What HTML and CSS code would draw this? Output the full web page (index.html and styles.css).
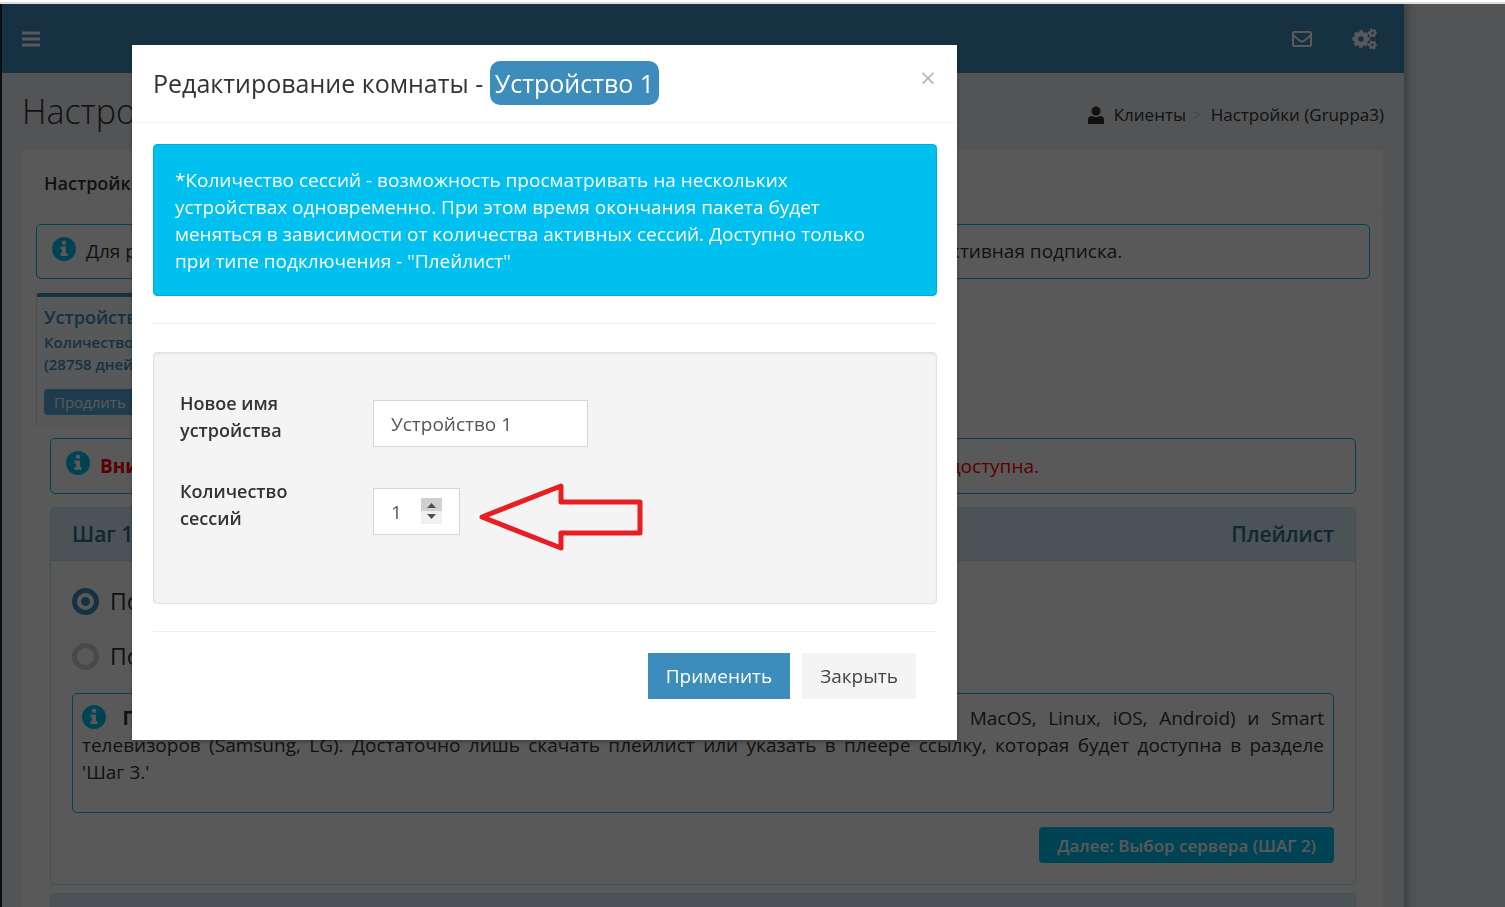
FILE: index.html
```html
<!DOCTYPE html>
<html lang="ru">
<head>
    <meta charset="UTF-8">
    <meta name="viewport" content="width=device-width, initial-scale=1.0">
    <title>Настройки</title>
    <link rel="stylesheet" href="styles.css">
</head>
<body>
    <div class="wrapper">
        <header class="main-header">
            <button type="button" class="nav-btn" aria-label="Меню">
                <svg width="18" height="16" viewBox="0 0 18 16"><path d="M1 2h16M1 8h16M1 14h16" stroke="#fff" stroke-width="3" stroke-linecap="round"/></svg>
            </button>
            <nav class="nav-right">
                <a href="#" aria-label="Сообщения">
                    <svg width="20" height="16" viewBox="0 0 20 16" fill="none" stroke="#fff" stroke-width="2"><rect x="1" y="1" width="18" height="14" rx="1"/><path d="M1 4l7 6q2 1 4 0l7-6"/></svg>
                </a>
                <a href="#" aria-label="Параметры">
                    <svg width="26" height="22" viewBox="0 0 26 22" fill="none" stroke="#fff">
                        <circle cx="9" cy="11" r="5" stroke-width="4.500"/>
                        <circle cx="9" cy="11" r="7.500" stroke-width="2.500" stroke-dasharray="3.500 2.390" stroke-dashoffset="1.750"/>
                        <circle cx="20.500" cy="5" r="2.400" stroke-width="2.200"/>
                        <circle cx="20.500" cy="5" r="3.800" stroke-width="1.600" stroke-dasharray="2.200 1.780" stroke-dashoffset="1.100"/>
                        <circle cx="20.500" cy="17" r="2.400" stroke-width="2.200"/>
                        <circle cx="20.500" cy="17" r="3.800" stroke-width="1.600" stroke-dasharray="2.200 1.780" stroke-dashoffset="1.100"/>
                    </svg>
                </a>
            </nav>
        </header>

        <section class="content-header">
            <h1>Настройки</h1>
            <nav class="breadcrumb">
                <svg width="16" height="18" viewBox="0 0 16 18" fill="#333"><circle cx="8" cy="5" r="4.500"/><path d="M0 17v-3q0-4 4-4q4 2 8 0q4 0 4 4v3q0 1-1 1H1q-1 0-1-1z"/></svg>
                <a href="#">Клиенты</a>
                <span class="sep">&gt;</span>
                <a href="#">Настройки (Gruppa3)</a>
            </nav>
        </section>

        <main class="box">
            <h2 class="box-title">Настройки</h2>
            <div class="box-body">
                <div class="note">
                    <svg class="info" viewBox="0 0 24 24"><circle cx="12" cy="12" r="12" fill="#00c0ef"/><path d="M12 3.500a2.200 2.200 0 1 1 0 4.400a2.200 2.200 0 1 1 0-4.400zM8.500 9.500h5.500v6.500h1.500v3h-7v-3H10v-3.500H8.500z" fill="#fff"/></svg>
                    <p>Для работы подключенного устройства необходимо, чтобы на балансе пользователя была активная подписка.</p>
                </div>

                <div class="tabs">
                    <div class="tab">
                        <a href="#" class="tab-name">Устройство 1</a>
                        <span class="tab-text">Количество сессий: 1</span>
                        <span class="tab-text">(28758 дней)</span>
                        <button type="button" class="extend">Продлить</button>
                    </div>
                </div>

                <div class="tab-content">
                    <div class="note warn">
                        <svg class="info" viewBox="0 0 24 24"><circle cx="12" cy="12" r="12" fill="#00c0ef"/><path d="M12 3.500a2.200 2.200 0 1 1 0 4.400a2.200 2.200 0 1 1 0-4.400zM8.500 9.500h5.500v6.500h1.500v3h-7v-3H10v-3.500H8.500z" fill="#fff"/></svg>
                        <p><b>Внимание!</b> После смены типа подключения ранее созданная ссылка на плейлист будет недоступна.</p>
                    </div>

                    <div class="panel">
                        <div class="panel-heading">
                            <span>Шаг 1</span>
                            <span>Плейлист</span>
                        </div>
                        <div class="panel-body">
                            <label class="choice"><input type="radio" name="type" checked> Подключение через плейлист</label>
                            <label class="choice"><input type="radio" name="type"> Подключение через портал</label>
                            <div class="description">
                                <svg class="info" viewBox="0 0 24 24"><circle cx="12" cy="12" r="12" fill="#00c0ef"/><path d="M12 3.500a2.200 2.200 0 1 1 0 4.400a2.200 2.200 0 1 1 0-4.400zM8.500 9.500h5.500v6.500h1.500v3h-7v-3H10v-3.500H8.500z" fill="#fff"/></svg>
                                <b>Плейлист</b> - подходит для большинства плееров, консолей, компьютеров (Windows, MacOS, Linux, iOS, Android) и Smart телевизоров (Samsung, LG). Достаточно лишь скачать плейлист или указать в плеере ссылку, которая будет доступна в разделе 'Шаг&nbsp;3.'
                            </div>
                            <button type="button" class="next">Далее: Выбор сервера (ШАГ 2)</button>
                        </div>
                    </div>

                    <div class="panel">
                        <div class="panel-heading"></div>
                    </div>
                </div>
            </div>
        </main>
    </div>

    <div class="backdrop">
        <form class="modal" role="dialog" aria-labelledby="modalTitle">
            <div class="modal-header">
                <h4 id="modalTitle">Редактирование комнаты - <span class="device">Устройство 1</span></h4>
                <button type="button" class="close" aria-label="Закрыть окно">&times;</button>
            </div>
            <div class="modal-body">
                <div class="callout">*Количество сессий - возможность просматривать на нескольких устройствах одновременно. При этом время окончания пакета будет меняться в зависимости от количества активных сессий. Доступно только при типе подключения - "Плейлист"</div>
                <hr>
                <div class="well">
                    <div class="form-row">
                        <label for="deviceName">Новое имя устройства</label>
                        <input type="text" id="deviceName" value="Устройство 1">
                    </div>
                    <div class="form-row">
                        <label for="sessions">Количество сессий</label>
                        <div class="number">
                            <input type="number" id="sessions" value="1" min="1">
                            <svg class="spinner" viewBox="0 0 21 26"><path d="M0 0h21v13H0z" fill="#d0d0d0"/><path d="M0 13h21v13H0z" fill="#f0f0f0"/><path d="M6 10l4.500-5L15 10zM6 16h9l-4.500 5z" fill="#505050"/></svg>
                            <svg class="arrow" viewBox="0 0 166 70"><path d="M3 35L82 4v16h79v31H82v15z" fill="none" stroke="#e81e25" stroke-width="5" stroke-linejoin="round"/></svg>
                        </div>
                    </div>
                </div>
                <hr>
                <div class="modal-footer">
                    <button type="submit" class="btn btn-primary">Применить</button>
                    <button type="button" class="btn">Закрыть</button>
                </div>
            </div>
        </form>
    </div>
</body>
</html>
```
FILE: styles.css
```css
* {
    box-sizing: border-box;
}

html {
    height: 100%;
    overflow: hidden;
    border-top: 2px solid #fff;
}

body {
    margin: 0;
    height: 100%;
    padding-right: 101px;
    overflow: hidden;
    border-top: 2px solid #ddd;
    background: #ecf0f5;
    font-family: "Open Sans", sans-serif;
    font-size: 19px;
    line-height: 27px;
    color: #333;
}

h1, h2, h4, p {
    margin: 0;
    font-weight: normal;
}

button, input {
    font: inherit;
}

a {
    color: inherit;
    text-decoration: none;
}

.wrapper {
    min-height: 100%;
    border-left: 2px solid #222d32;
    background: #ecf0f5;
    box-shadow: 0 0 11px rgba(0, 0, 0, 0.5);
}

.main-header {
    display: flex;
    align-items: center;
    justify-content: space-between;
    height: 69px;
    padding: 0 26px 0 20px;
    background: #3c8dbc;
}

.nav-btn {
    padding: 0;
    border: 0;
    background: none;
}

.nav-right {
    display: flex;
    align-items: center;
    gap: 40px;
}

.main-header svg {
    display: block;
}

.content-header {
    display: flex;
    align-items: center;
    justify-content: space-between;
    height: 77px;
    padding: 0 20px;
}

.content-header h1 {
    font-size: 34px;
    font-weight: 300;
}

.breadcrumb {
    display: flex;
    align-items: center;
    gap: 6px;
    padding-top: 6px;
    font-size: 17px;
}

.breadcrumb svg {
    margin-right: 4px;
}

.breadcrumb .sep {
    margin-right: 3px;
    color: #ccc;
}

.box {
    margin: 0 21px 0 20px;
    border-radius: 4px 4px 0 0;
    background: #fff;
}

.box-title {
    padding: 20px 22px 13px;
    border-bottom: 1px solid #f4f4f4;
    font-size: 18px;
    line-height: 27px;
    font-weight: 600;
}

.box-body {
    padding: 13px 13px 13px 14px;
}

.note {
    display: flex;
    align-items: center;
    gap: 10px;
    height: 55px;
    padding: 0 15px;
    border: 1px solid #00c0ef;
    border-radius: 5px;
}

.info {
    width: 24px;
    height: 24px;
    flex: none;
}

.note .info {
    margin-bottom: 6px;
}

.note p {
    white-space: nowrap;
}

.warn {
    height: 56px;
    color: #f00;
}

.tabs {
    margin-top: 14px;
    border-bottom: 1px solid #f4f4f4;
}

.tab {
    width: 240px;
    height: 132px;
    padding: 7px;
    border-top: 4px solid #3c8dbc;
    border-left: 1px solid #ddd;
    border-radius: 4px 4px 0 0;
    background: #f7fcff;
    color: #3c8dbc;
    font-size: 15px;
    line-height: 22px;
    font-weight: 600;
}

.tab-name,
.tab-text {
    display: block;
}

.tab-name {
    font-size: 18px;
    line-height: 27px;
}

.extend {
    display: block;
    width: 110px;
    height: 26px;
    margin-top: 14px;
    padding: 0 10px;
    border: 0;
    border-radius: 4px;
    background: #57abdc;
    color: #fff;
    font-size: 15px;
    line-height: 24px;
    font-weight: normal;
    text-align: left;
}

.tab-content {
    padding: 12px 14px;
}

.panel {
    margin-top: 13px;
    border: 1px solid #bce8f1;
    border-radius: 5px;
}

.panel + .panel {
    margin-top: 8px;
}

.panel-heading {
    display: flex;
    justify-content: space-between;
    min-height: 53px;
    padding: 13px 21px 12px;
    border-bottom: 1px solid #bce8f1;
    background: #d9edf7;
    color: #31708f;
    font-size: 21px;
    font-weight: 600;
}

.panel-body {
    padding: 27px 21px 21px;
}

.choice {
    display: flex;
    align-items: center;
    gap: 11px;
    margin-bottom: 28px;
    font-size: 23px;
}

.choice input {
    appearance: none;
    width: 27px;
    height: 27px;
    margin: 0;
    border: 5px solid #d0d0d0;
    border-radius: 50%;
}

.choice input:checked {
    border-color: #3c8dbc;
    background: radial-gradient(circle, #3c8dbc 4px, transparent 5px);
}

.choice + .description {
    margin-top: -5px;
}

.description {
    height: 120px;
    padding: 11px 9px;
    border: 1px solid #00c0ef;
    border-radius: 5px;
    text-align: justify;
}

.description .info {
    margin-right: 5px;
    vertical-align: -4px;
}

.next {
    display: block;
    height: 36px;
    margin: 14px 0 0 auto;
    padding: 0 18px;
    border: 0;
    border-radius: 4px;
    background: #00c0ef;
    color: #fff;
    font-size: 17px;
    font-weight: 600;
}

/* modal window */
.backdrop {
    position: fixed;
    inset: 4px 0 0 0;
    padding: 41px 132px;
    background: rgba(0, 0, 0, 0.65);
}

.modal {
    max-width: 825px;
    background: #fff;
    box-shadow: 0 2px 4px rgba(0, 0, 0, 0.3);
}

.modal-header {
    display: flex;
    align-items: flex-start;
    justify-content: space-between;
    padding: 16px 21px 17px;
    border-bottom: 1px solid #f4f4f4;
}

.modal-header h4 {
    font-size: 25px;
    line-height: 44px;
}

.device {
    display: inline-block;
    padding: 0 5px;
    border-radius: 10px;
    background: #3c8dbc;
    color: #fff;
}

.close {
    padding: 0;
    border: 0;
    background: none;
    color: #bbb;
    font-size: 28px;
    line-height: 32px;
}

.modal-body {
    padding: 21px 20px 41px 21px;
}

.modal-body hr {
    height: 1px;
    margin: 27px 0 28px;
    border: 0;
    background: #eee;
}

.modal-body .well + hr {
    margin-bottom: 21px;
}

.callout {
    padding: 22px 60px 20px 21px;
    border: 1px solid #00acd6;
    border-radius: 4px;
    background: #00c0ef;
    color: #fff;
}

.well {
    min-height: 252px;
    padding: 37px 26px;
    border: 1px solid #e3e3e3;
    border-radius: 4px;
    background: #f4f4f4;
    box-shadow: inset 0 1px 2px rgba(0, 0, 0, 0.08);
}

.form-row {
    display: grid;
    grid-template-columns: 166px 1fr;
    column-gap: 27px;
    margin-bottom: 31px;
}

.form-row + .form-row {
    margin-bottom: 0;
}

.form-row label {
    padding-right: 30px;
    font-size: 18px;
    font-weight: 600;
}

.form-row input {
    height: 47px;
    margin-top: 10px;
    padding: 0 17px;
    border: 1px solid #d2d6de;
    border-radius: 0;
    background: #fff;
    color: #555;
}

#deviceName {
    width: 215px;
}

.number {
    position: relative;
    height: 57px;
}

#sessions {
    width: 87px;
    appearance: textfield;
}

.spinner {
    position: absolute;
    left: 48px;
    top: 20px;
    width: 21px;
    height: 26px;
}

.arrow {
    position: absolute;
    left: 106px;
    top: 4px;
    width: 166px;
    height: 70px;
}

.modal-footer {
    display: flex;
    justify-content: flex-end;
    gap: 12px;
    padding-right: 21px;
}

.btn {
    height: 46px;
    padding: 0 18px;
    border: 0;
    background: #f4f4f4;
    color: #444;
}

.btn-primary {
    background: #3c8dbc;
    color: #fff;
}
```
